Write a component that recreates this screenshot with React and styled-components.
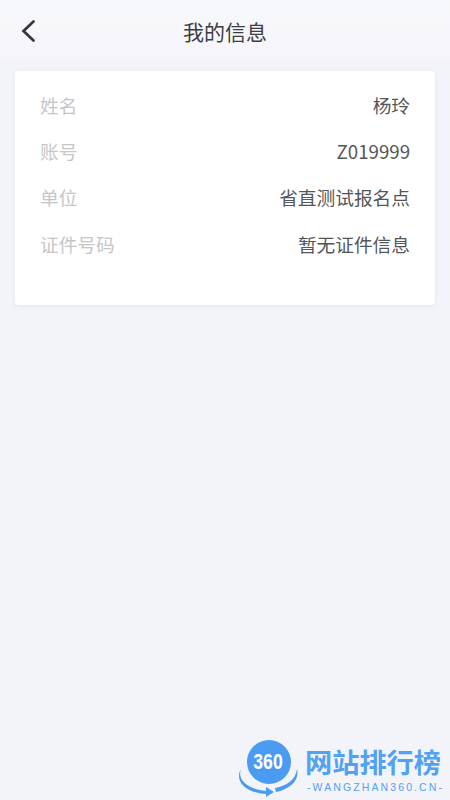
import React from "react";
import styled, {createGlobalStyle} from "styled-components";

const GlobalStyle = createGlobalStyle`
    html, body {
        margin: 0;
        padding: 0;
        background-color: #f3f3fa;
    }
    * {
        box-sizing: border-box;
    }
`;

const Page = styled.div`
    position: relative;
    width: 450px;
    height: 800px;
    overflow: hidden;
    background-color: #f3f3fa;
    font-family: "Noto Sans CJK SC", "Noto Sans", sans-serif;
`;

const Header = styled.header`
    position: relative;
    height: 58px;
    display: flex;
    justify-content: center;
    align-items: center;
    padding-top: 3px;
    background: linear-gradient(#f7f8fc, #f5f5fb);
`;

const BackButton = styled.button`
    position: absolute;
    left: 19px;
    top: 18px;
    width: 20px;
    height: 26px;
    padding: 0;
    border: none;
    background: none;
    display: flex;
`;

const Title = styled.h1`
    margin: 0;
    font-size: 21px;
    font-weight: 400;
    color: #3c3e44;
`;

const Card = styled.section`
    margin: 13px 15px 0;
    height: 234px;
    padding: 10px 25px 0;
    background-color: #fff;
    border-radius: 4px;
    box-shadow: 0 1px 4px rgba(210, 212, 228, 0.45);
`;

const Row = styled.div`
    height: 46.3px;
    display: flex;
    justify-content: space-between;
    align-items: center;
    font-size: 18.7px;
`;

const Label = styled.span`
    color: #c6c6c8;
`;

const Value = styled.span`
    color: #55565a;
`;

const Watermark = styled.div`
    position: absolute;
    left: 238px;
    top: 740px;
    display: flex;
    align-items: flex-start;
    gap: 7px;
`;

const Badge = styled.div`
    position: relative;
    width: 60px;
    height: 58px;
    flex-shrink: 0;
`;

const BadgeNumber = styled.span`
    position: absolute;
    left: 0;
    right: 0;
    top: 9px;
    text-align: center;
    font-family: "Liberation Sans", sans-serif;
    font-size: 22px;
    font-weight: 700;
    color: #fff;
    transform: scaleX(0.8);
`;

const BrandText = styled.div`
    display: flex;
    flex-direction: column;
    padding-top: 5px;
`;

const BrandName = styled.div`
    font-size: 27.2px;
    line-height: 33px;
    height: 33px;
    font-weight: 700;
    white-space: nowrap;
    color: #52a2f2;
`;

const BrandUrl = styled.div`
    margin: 3px 0 0 2px;
    font-family: "Liberation Sans", sans-serif;
    font-size: 10.5px;
    line-height: 12px;
    letter-spacing: 2.1px;
    white-space: nowrap;
    color: #52a2f2;
`;

const rows = [
    {label: "姓名", value: "杨玲"},
    {label: "账号", value: "Z019999"},
    {label: "单位", value: "省直测试报名点"},
    {label: "证件号码", value: "暂无证件信息"},
];

const App = () => {
    return (
        <Page>
            <GlobalStyle />
            <Header>
                <BackButton aria-label="返回">
                    <svg width="20" height="26" viewBox="0 0 20 26" fill="none">
                        <path
                            d="M14.5 3.5 L4.5 13 L14.5 22.5"
                            stroke="#36383e"
                            strokeWidth="2.7"
                            strokeLinecap="round"
                            strokeLinejoin="miter"
                        />
                    </svg>
                </BackButton>
                <Title>{"我的信息"}</Title>
            </Header>
            <Card>
                {rows.map((row) => (
                    <Row key={row.label}>
                        <Label>{row.label}</Label>
                        <Value>{row.value}</Value>
                    </Row>
                ))}
            </Card>
            <Watermark>
                <Badge>
                    <svg width="60" height="58" viewBox="0 0 60 58" fill="none">
                        <circle cx="31" cy="22" r="22" fill="#4a9cf3" />
                        <path
                            d="M3 29 C-1 39 9 49 28 51 L28 47 L36 52 L28 57 L28 54 C8 53 -4 41 3 29 Z"
                            fill="#4a9cf3"
                        />
                        <path
                            d="M59 29 C62 40 52 49 38 52 L37 48 C49 46 58 39 59 29 Z"
                            fill="#4a9cf3"
                        />
                    </svg>
                    <BadgeNumber>{"360"}</BadgeNumber>
                </Badge>
                <BrandText>
                    <BrandName>{"网站排行榜"}</BrandName>
                    <BrandUrl>{"-WANGZHAN360.CN-"}</BrandUrl>
                </BrandText>
            </Watermark>
        </Page>
    );
};

export default App;
